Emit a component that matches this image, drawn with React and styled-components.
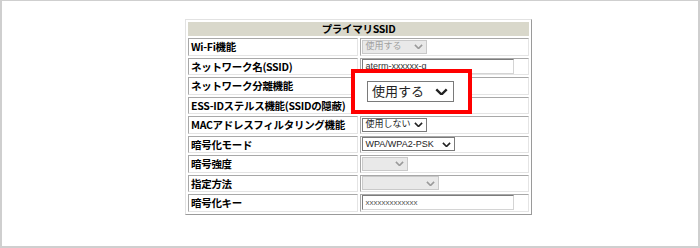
import React from "react"
import styled, { createGlobalStyle } from "styled-components"

const GlobalStyle = createGlobalStyle`
  html, body {
    margin: 0;
    padding: 0;
    background: #fff;
  }
  body {
    font-family: "Noto Sans CJK JP", "Noto Sans", sans-serif;
  }
`

const Page = styled.div`
  position: relative;
  width: 700px;
  height: 248px;
  box-sizing: border-box;
  border: 2px solid #cfcfcf;
  border-top-width: 1px;
  padding: 18px 0 0 183px;
  background: #fff;
`

const Table = styled.table`
  width: 347px;
  border-collapse: separate;
  border-spacing: 2px;
  border: 1px solid;
  border-color: #e2e2e2 #9a9a9a #9a9a9a #e2e2e2;
  font-size: 11px;
  line-height: 13px;
  color: #000;
`

const HeadCell = styled.th`
  height: 14px;
  box-sizing: border-box;
  padding: 0;
  background: #d9d8cb;
  border: 0;
  font-size: 10.5px;
  font-weight: bold;
  line-height: 14px;
  text-align: center;
  letter-spacing: -0.3px;
`

const Cell = styled.td`
  height: 17.5px;
  box-sizing: border-box;
  width: 50%;
  padding: 0 2px;
  border: 1px solid;
  border-color: #a8a8a8 #e4e4e4 #e4e4e4 #a8a8a8;
  vertical-align: middle;
  white-space: nowrap;
  line-height: 13px;
`

const Label = styled(Cell)`
  font-weight: bold;
  font-size: 10.5px;
  letter-spacing: -0.3px;
`

const Value = styled(Cell)`
  padding: 0 1px;
  font-size: 0;
`

const SelectBox = styled.span`
  display: inline-flex;
  align-items: center;
  justify-content: space-between;
  box-sizing: border-box;
  width: ${(p) => p.w}px;
  height: ${(p) => p.h || 14}px;
  padding: 0 ${(p) => (p.big ? 5 : 3)}px 0 ${(p) => (p.big ? 4 : 3)}px;
  border: 1px solid ${(p) => (p.disabled ? "#c9c9c9" : "#7a7a7a")};
  background: ${(p) => (p.disabled ? "#e9e9e9" : "#fff")};
  color: ${(p) => (p.disabled ? "#a0a0a0" : "#222")};
  font-family: "Liberation Sans", "Noto Sans CJK JP", sans-serif;
  font-size: ${(p) => (p.big ? 13 : 9)}px;
  font-weight: normal;
  line-height: 1;
  vertical-align: middle;
  white-space: nowrap;
  svg {
    flex: none;
  }
`

const TextBox = styled.span`
  display: inline-flex;
  align-items: center;
  box-sizing: border-box;
  width: 152px;
  height: 15px;
  padding: 0 3px;
  border: 1px solid;
  border-color: #7c7c7c #d4d4d4 #d4d4d4 #7c7c7c;
  background: #fff;
  color: ${(p) => p.tone || "#333"};
  font-family: "Liberation Sans", sans-serif;
  font-size: ${(p) => p.size || 9}px;
  line-height: 1;
  vertical-align: middle;
`

const Callout = styled.div`
  position: absolute;
  left: 349px;
  top: 68px;
  width: 121px;
  height: 45px;
  box-sizing: border-box;
  border: 4px solid #ff0000;
  background: #fff;
  display: flex;
  align-items: center;
  padding-left: 12px;
`

function Chevron({ size = 9, color = "#333" }) {
  return (
    <svg width={size} height={size * 0.6} viewBox="0 0 10 6">
      <path d="M1 1 L5 5 L9 1" fill="none" stroke={color} strokeWidth="1.8" />
    </svg>
  )
}

function Select({ w, text, disabled, big, h }) {
  return (
    <SelectBox w={w} h={h} disabled={disabled} big={big}>
      <span>{text}</span>
      <Chevron size={big ? 13 : 9} color={disabled ? "#9a9a9a" : "#222"} />
    </SelectBox>
  )
}

const rows = [
  ["Wi-Fi機能", <Select w={65} text="使用する" disabled />],
  ["ネットワーク名(SSID)", <TextBox>aterm-xxxxxx-g</TextBox>],
  ["ネットワーク分離機能", <Select w={65} text="" />],
  ["ESS-IDステルス機能(SSIDの隠蔽)", <Select w={65} text="" />],
  ["MACアドレスフィルタリング機能", <Select w={65} text="使用しない" />],
  ["暗号化モード", <Select w={93} text="WPA/WPA2-PSK" />],
  ["暗号強度", <Select w={46} text="" disabled />],
  ["指定方法", <Select w={77} text="" disabled />],
  ["暗号化キー", <TextBox size={8} tone="#555">xxxxxxxxxxxxx</TextBox>],
]

export default function App() {
  return (
    <>
      <GlobalStyle />
      <Page>
        <Table>
          <thead>
            <tr>
              <HeadCell colSpan={2}>プライマリSSID</HeadCell>
            </tr>
          </thead>
          <tbody>
            {rows.map(([label, control]) => (
              <tr key={label}>
                <Label>{label}</Label>
                <Value>{control}</Value>
              </tr>
            ))}
          </tbody>
        </Table>
        <Callout>
          <Select w={87} h={21} text="使用する" big />
        </Callout>
      </Page>
    </>
  )
}
